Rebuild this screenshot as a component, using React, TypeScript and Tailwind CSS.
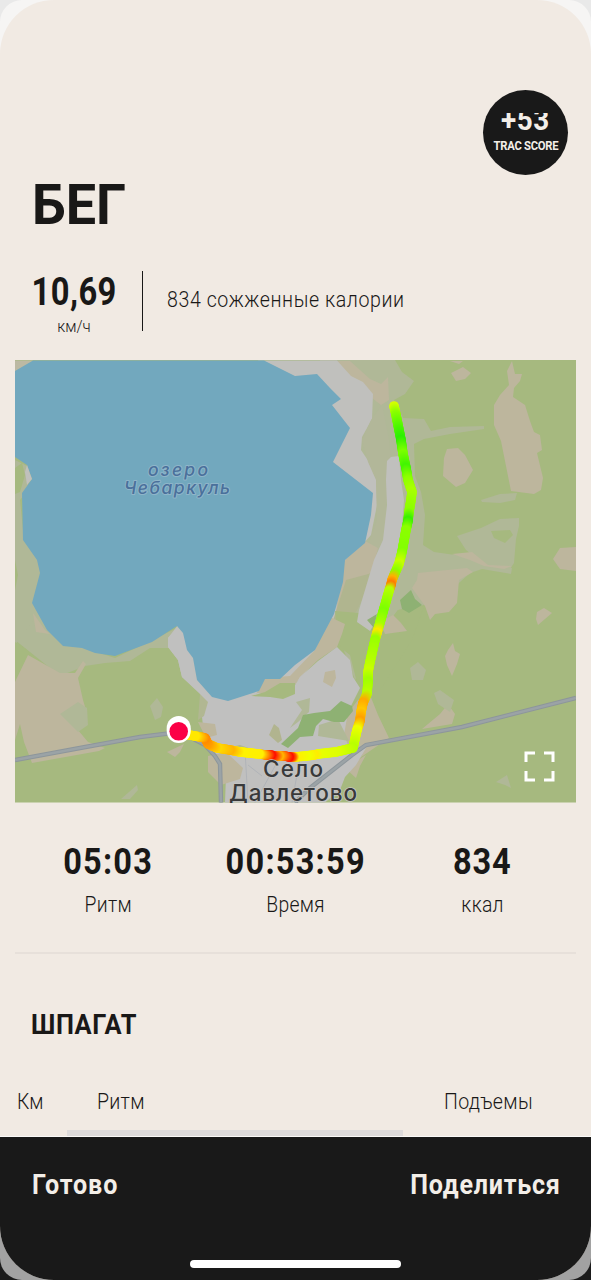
import React from "react";

type Stop = [number, number, string];

const route: Stop[] = [
  [394, 406, "#d8ff00"],
  [396, 415, "#8cff00"],
  [399, 430, "#4cf800"],
  [401, 440, "#2cf000"],
  [403, 454, "#7dff00"],
  [406, 468, "#42f500"],
  [408, 480, "#8cff00"],
  [412, 492, "#aaff00"],
  [411, 500, "#9dff00"],
  [409, 512, "#8cff00"],
  [408, 521, "#38f000"],
  [406, 530, "#8cff00"],
  [402, 552, "#84ff00"],
  [399, 564, "#c8ff00"],
  [395, 573, "#8cff00"],
  [392, 580, "#ffb000"],
  [391, 585, "#ff7a00"],
  [389, 591, "#b8ff00"],
  [383, 612, "#7dff00"],
  [379, 626, "#a8ff00"],
  [377, 633, "#ffe600"],
  [375, 640, "#98ff00"],
  [370, 662, "#b4ff00"],
  [368, 672, "#c8ff00"],
  [368, 682, "#a0ff00"],
  [367, 694, "#b8ff00"],
  [363, 703, "#ffa800"],
  [361, 712, "#ffc800"],
  [360, 721, "#ffa000"],
  [357, 730, "#f0ff00"],
  [353, 748, "#b8ff00"],
  [336, 752, "#dcff00"],
  [318, 754, "#e8ff00"],
  [314, 755, "#ffec00"],
  [306, 756, "#f0ff00"],
  [295, 757, "#fff000"],
  [292, 757, "#ff6000"],
  [289, 757, "#ff0c00"],
  [285, 756, "#ff5000"],
  [279, 756, "#ffb800"],
  [275, 756, "#ff6000"],
  [271, 755, "#ff0c00"],
  [266, 755, "#ff7000"],
  [259, 754, "#fff000"],
  [240, 752, "#fff200"],
  [230, 750, "#ffb400"],
  [217, 748, "#ffd800"],
  [208, 744, "#ffa000"],
  [205, 738, "#ff8a00"],
  [195, 736, "#ffe800"],
  [182, 734, "#ffe800"],
];

const channels = (c: string) => [1, 3, 5].map((i) => parseInt(c.slice(i, i + 2), 16));

const dots = route.slice(1).flatMap(([x, y, c], i) => {
  const [px, py, pc] = route[i];
  const a = channels(pc);
  const b = channels(c);
  const n = Math.max(2, Math.round(Math.hypot(x - px, y - py)));
  return Array.from({ length: n }, (_, k) => {
    const t = k / n;
    return {
      x: px + (x - px) * t,
      y: py + (y - py) * t,
      fill: `rgb(${a.map((v, j) => Math.round(v + (b[j] - v) * t)).join(",")})`,
    };
  });
});

function RouteMap() {
  return (
    <svg viewBox="15 360 561 443" className="block h-[443px] w-[561px]">
      <rect x="15" y="360" width="561" height="442.5" fill="#a6b97f" />
      {/* mixed scrub */}
      <g fill="#b0b897">
        <path d="M320 360H395L402 372L414 381L405 394L394 400L403 418L424 419L431 431L450 427L484 426V429L450 434L424 439L414 444L415 476L421 492L425 515L423 545L434 552L462 556L472 552L478 559L512 568L511 574L482 569L470 573L440 600L420 606L398 610L375 640L355 680L340 640L330 600Z" />
        <path d="M15 540L40 560V575L38 600L60 640L115 658L177 628V648L150 648L130 661L105 663L85 666L60 676L15 640Z" />
        <path d="M457 536L481 528L500 519L519 518V526L516 539L514 563L510 569L488 567L466 550Z" />
        <path d="M481 500L500 494L517 493L515 500L500 503L482 502Z" />
        <path d="M15 460L27 466L28 490L20 500L24 540L41 565V610L15 645Z" />
      </g>
      <path d="M491 531L510 530L513 535L505 543L494 538Z" fill="#a6b97f" />
      <path d="M15 468L22 463L25 475L20 492L15 494ZM15 642L27 650V668L21 680L15 681ZM15 560L18 575L15 590ZM398 610L424 606L412 640L380 690L368 690L376 640Z" fill="#a6b97f" />
      {/* fields */}
      <g fill="#bdb69d">
        <path d="M337 361H350L370 379L381 384L388 377L389 400L381 405L372 398L350 385Z" />
        <path d="M512 361L515 374L522 374L520 381L514 388L513 397L525 405L530 421L534 432L540 435L542 450L537 453L543 478L541 490L534 494L511 491L501 441L494 425L494 405L500 395L509 385L507 371Z" />
        <path d="M451 373L463 367L471 373L465 379L456 381ZM450 361H463L459 364Z" />
        <path d="M447 449L458 448L465 455L473 470L465 483L456 487L443 476L444 458Z" />
        <path d="M576 547L560 548L553 559L560 569L576 571Z" />
        <path d="M452 554L472 552L488 565L512 566L504 569L484 566L470 560Z" />
        <path d="M418 573L467 568L473 572L459 580L457 603L449 612L435 614L430 620L425 606L412 588L417 580Z" />
        <path d="M537 612L544 608L552 613L545 619L538 625L536 619Z" />
        <path d="M448 650L453 643L455 651L460 654L457 664L452 676L447 665L445 656Z" />
        <path d="M422 729L440 714L448 704L455 714L452 724ZM370 695L378 715L389 738L345 768L362 755L340 750L344 718L358 700Z" />
        <path d="M393 615L401 623L407 631L385 634L380 622Z" />
        <path d="M15 682L28 655L60 673L75 673L83 661L86 664L78 678L83 700L86 710L78 730L88 742L105 748L99 751L32 763L24 742L20 724L15 740Z" />
        <path d="M167 752L184 744L180 752L175 757ZM345 768L366 755L360 766L356 778Z" />
        <path d="M33 613L45 630L50 634L36 632Z" />
      </g>
      <path d="M60 714L78 702L87 708L88 725L78 732L68 722Z" fill="#b0b897" />
      {/* shoreline */}
      <path d="M258 360.5H337L351 376L363 382L373 394L372 419L362 437L361 450L369 462L376 478L377 505L371 535L362 545L354 592L336 632L300 680L260 696L230 704L200 693L182 677L178 660L168 647L168 638L178 625L200 640L340 520L330 440Z" fill="#c0c0bd" />
      <path d="M371 420L362 440L368 462L376 480L377 520L368 545L361 570L370 567L386 540V505L392 470L389 440L382 405Z" fill="#b2b799" />
      <path d="M342 563L365 541L378 548L372 572L352 585L336 612Z" fill="#bdb69d" />
      <path d="M346 580L372 573L362 600L356 612L338 622L330 630Z" fill="#b0b58f" />
      <path d="M335 611L359 613L374 628L370 650L365 692L357 683L350 655L341 648L338 638Z" fill="#a6b97f" />
      <path d="M330 617L345 624L342 634L337 647L318 660L300 677L296 684L275 698L255 696L265 678L290 676L315 650Z" fill="#bdb69d" />
      <path d="M387 461L391 457L399 456L401 480L404 500L401 540L396 566L390 592L380 615L370 631L357 622L359 610L368 580L374 560L383 540L387 505L386 480Z" fill="#c0c0bd" />
      {/* village */}
      <path d="M178 627L185 638L190 655L195 680L210 695L228 701L258 693L280 697L292 690L300 677L318 661L337 647L350 660L353 677L360 688L348 712L344 735L350 750L366 748L356 765L345 777L340 790L325 802.5H225L226 775L213 750L204 735L202 717L200 694L182 677L178 660L168 647V638Z" fill="#c0c0bf" />
      <path d="M200 694L208 702L204 716L198 720Z" fill="#b1b792" />
      <path d="M251 696L265 692L280 683L295 683L295 694L283 699L270 697Z" fill="#a6b97f" />
      <path d="M225 748L240 745L260 752L250 758Z" fill="#b1b792" />
      <path d="M198 722L215 724L217 735L206 738ZM208 756L226 752L243 768L240 779L221 785L208 772Z" fill="#bdb69d" />
      <path d="M325 672L335 670L336 678L332 687L323 682Z" fill="#bdb69d" />
      <path d="M274 724L279 728L282 740L278 743L269 735Z" fill="#b1b48f" />
      <path d="M296 702L310 698L309 712L298 722L290 728L302 710ZM319 725L338 719L349 741L318 736Z" fill="#b0b897" />
      <path d="M281 744L298 728L303 715L314 713L330 711L341 701L352 706L353 711L344 722L334 722L323 719L316 726L313 736L300 737L288 748Z" fill="#8eb173" />
      <path d="M400 600L411 590L415 599L422 605L409 613L402 609ZM367 620L377 614L374 628Z" fill="#8eb173" />
      <path d="M410 668L418 662L426 670L423 680L412 680ZM434 693L440 690L454 700L450 712L438 704ZM496 782L507 775L511 788L505 785ZM150 706L157 698L163 707L161 717L155 720ZM121 799L137 785L138 790L130 799Z" fill="#b0b897" />
      <path d="M15 360.5H33L27 368L15 372Z" fill="#bcb9a3" />
      {/* lake */}
      <path d="M33 360.5H264L295 376L317 374L330 388L341 399L332 405L350 428L343 442L333 462L373 493L371 515L365 543L345 560L343 582L334 614L315 650L295 665L280 679L265 679L259 691L228 701L212 697L197 680L193 658L187 650L183 633L177 626L152 642L115 656L95 653L82 648L63 646L47 630L32 603L40 573L37 560L23 540L22 493L32 479L27 465L15 457V371Z" fill="#72a8be" />
      <path d="M27 465L32 479L27 485L25 472Z" fill="#c0c0bd" />
      {/* roads */}
      <g fill="none">
        <path d="M245 750L248 802.5M280 757L255 802.5M300 758L292 802.5M248 765L262 776" stroke="#b0b3b8" strokeWidth="1" />
        <path d="M15 760L80 748L140 737L180 732L205 745L215 756L220 764L221 802.5M576 698L462 727L366 745L352 755L310 788L295 802.5" stroke="#8d969b" strokeWidth="4.4" />
        <path d="M15 760L80 748L140 737L180 732L205 745L215 756L220 764L221 802.5M576 698L462 727L366 745L352 755L310 788L295 802.5" stroke="#9ba3a6" strokeWidth="2.4" />
      </g>
      {dots.map((d, i) => (
        <circle key={i} cx={d.x} cy={d.y} r="4.8" fill={d.fill} />
      ))}
      <circle cx="178.7" cy="728" r="12" fill="#fff" />
      <circle cx="178.7" cy="731" r="12" fill="#fff" />
      <circle cx="178.7" cy="731.3" r="9.3" fill="#fb0046" />
      <g fontFamily="Inter, sans-serif" paintOrder="stroke" strokeLinejoin="round">
        <g fontSize="17.5" fontStyle="italic" fontWeight="500" fill="#4a709b" stroke="#8fb5c9" strokeWidth="2">
          <text x="148" y="476" textLength="60">озеро</text>
          <text x="124" y="494" textLength="106">Чебаркуль</text>
        </g>
        <g fontSize="22.5" fontWeight="500" fill="#38393a" stroke="#c6c6c4" strokeWidth="1.6">
          <text x="263" y="777" textLength="60">Село</text>
          <text x="229" y="801" textLength="128">Давлетово</text>
        </g>
      </g>
      <path d="M535 753H526V762M544 753H553V762M535 780H526V771M544 780H553V771" fill="none" stroke="#fff" strokeWidth="3" />
    </svg>
  );
}

function Stat({ value, label, valueClass }: { value: string; label: string; valueClass: string }) {
  return (
    <div className="flex flex-col items-center whitespace-nowrap">
      <div className={`text-[37px] leading-[44px] font-bold ${valueClass}`}>{value}</div>
      <div className="mt-[5px] scale-x-[0.9] text-[21.5px] leading-8 font-light tracking-[0.3px]">{label}</div>
    </div>
  );
}

export default function App() {
  return (
    <div className="h-[1280px] w-[591px] bg-[linear-gradient(#e9e9e9_50%,#1b1b1b_50%)] font-['Roboto',sans-serif] text-[#191817]">
      <div className="h-full overflow-hidden rounded-[22px] bg-[linear-gradient(#f6f5f4_50%,#a2a2a2_50%)]">
        <div className="flex h-full flex-col overflow-hidden rounded-[54px] bg-[#f1eae3]">
          <header className="flex h-[175px] shrink-0 items-end justify-end pr-[23px]">
            <div className="flex size-[85px] flex-col items-center rounded-full bg-[#191919] pt-[23px] font-bold whitespace-nowrap text-[#f3eee8]">
              <div className="flex h-[19px] items-end overflow-hidden">
                <span className="-mb-[5px] block scale-x-[0.96] text-[29px] leading-[34px] tracking-[0.6px]">+53</span>
              </div>
              <span className="mt-[5px] scale-x-[0.9] text-[12.5px] leading-[18px] tracking-[-0.3px]">TRAC SCORE</span>
            </div>
          </header>
          <h1 className="ml-[31.5px] h-[60px] shrink-0 origin-left scale-x-[0.98] text-[55px] leading-[60px] font-bold">БЕГ</h1>
          <section className="mt-9 flex h-[60px] shrink-0 items-center pl-[32px]">
            <div className="flex w-[84px] flex-col items-center self-start whitespace-nowrap">
              <span className="scale-x-[0.85] text-[38.5px] leading-[41px] font-bold tracking-[0.5px]">10,69</span>
              <span className="mt-[3px] scale-x-[0.93] text-[16.5px] leading-6 font-light">км/ч</span>
            </div>
            <div className="ml-[25.5px] h-full w-[1.5px] bg-[#191817]" />
            <p className="-mt-0.5 ml-6 origin-left scale-x-[0.91] text-[21.5px] leading-8 font-light tracking-[0.65px] whitespace-nowrap">834 сожженные калории</p>
          </section>
          <div className="mt-[29px] ml-[15px] shrink-0">
            <RouteMap />
          </div>
          <section className="mx-[15px] grid h-[151px] shrink-0 grid-cols-3 border-b-2 border-[#e7e0da] pt-[37px]">
            <Stat value="05:03" label="Ритм" valueClass="scale-x-[0.88] tracking-[1.4px]" />
            <Stat value="00:53:59" label="Время" valueClass="scale-x-[0.88] tracking-[1.4px]" />
            <Stat value="834" label="ккал" valueClass="scale-x-[0.88] tracking-[1px]" />
          </section>
          <section className="flex min-h-0 grow flex-col pt-[55px]">
            <h2 className="ml-[30.5px] origin-left scale-x-[0.94] text-[27px] leading-8 font-bold tracking-[0.7px]">ШПАГАТ</h2>
            <div className="mt-[45px] flex text-[21.5px] leading-8 font-light whitespace-nowrap">
              <div className="w-[80px] pl-[16.5px]"><span className="inline-block origin-left scale-x-[0.9]">Км</span></div>
              <div className="w-[347px] pl-[17px]"><span className="inline-block origin-left scale-x-[0.91] tracking-[0.3px]">Ритм</span></div>
              <div className="pl-[16.5px]"><span className="inline-block origin-left scale-x-[0.91] tracking-[0.4px]">Подъемы</span></div>
            </div>
            <div className="mt-[12px] ml-[67px] h-[6px] w-[336px] bg-[#dedbdb]" />
            <div className="h-px w-full bg-[#fbfaf8]" />
          </section>
          <footer className="flex h-[143px] shrink-0 flex-col bg-[#191919] text-[#f3eee8]">
            <div className="flex justify-between pt-8 pr-[30px] pl-[32px] text-[27px] leading-8 font-bold">
              <button className="origin-left scale-x-[0.93] tracking-[1px]">Готово</button>
              <button className="origin-right scale-x-[0.93] tracking-[0.8px]">Поделиться</button>
            </div>
            <div className="mx-auto mt-[59px] h-2 w-[211px] rounded-full bg-white" />
          </footer>
        </div>
      </div>
    </div>
  );
}
